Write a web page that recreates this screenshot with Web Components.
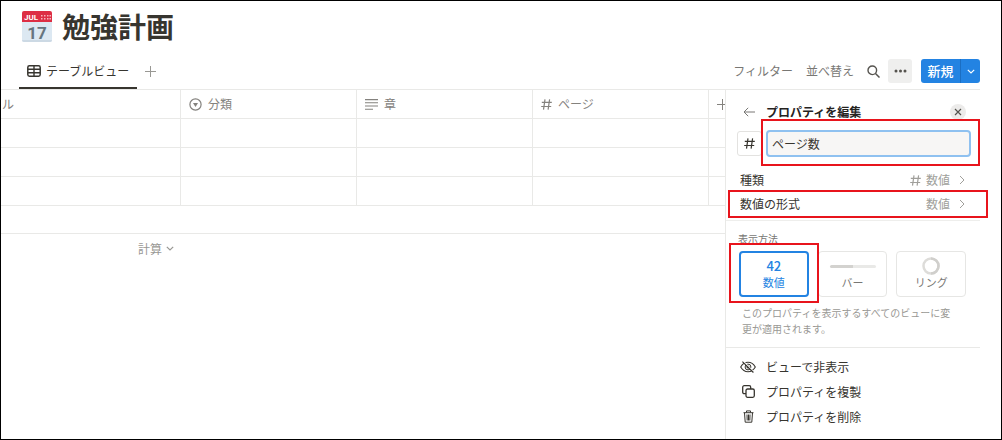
<!DOCTYPE html>
<html lang="ja">
<head>
<meta charset="utf-8">
<title>勉強計画</title>
<style>
html, body { margin: 0; }
body { font-family: "Noto Sans CJK JP", sans-serif; font-size: 12px; line-height: 16px; color: #37352f; background: #fff; }
</style>
</head>
<body>
<study-page></study-page>
<script>
const base = `:host,*{box-sizing:border-box}
button{font:inherit;color:inherit;background:none;border:0;padding:0;margin:0;display:inline-flex;align-items:center;cursor:pointer;white-space:nowrap}
svg{display:block}`;

function define(name, css, html) {
  customElements.define(name, class extends HTMLElement {
    constructor() {
      super();
      this.attachShadow({ mode: 'open' }).innerHTML = `<style>${base}${css}</style>${html}`;
    }
  });
}

const icons = {
  table: [14, 12, '<rect x=".8" y=".8" width="12.4" height="10.4" rx="1.6" stroke-width="1.5"/><path d="M1 4.3h12M1 7.7h12M7 1v10" stroke-width="1.4"/>'],
  plus: [11, 11, '<path d="M5.5 0v11M0 5.5h11"/>'],
  search: [13, 13, '<circle cx="5.3" cy="5.3" r="4.3" stroke-width="1.4"/><path d="M8.5 8.5l4 4" stroke-width="1.5"/>'],
  dots: [13, 4, '<g fill="currentColor" stroke="none"><circle cx="2" cy="2" r="1.5"/><circle cx="6.5" cy="2" r="1.5"/><circle cx="11" cy="2" r="1.5"/></g>'],
  down: [8, 5, '<path d="M.8.8L4 4 7.2.8" stroke-width="1.2"/>'],
  right: [6, 10, '<path d="M1 1l4 4-4 4"/>'],
  back: [12, 10, '<path d="M12 5H1M5.2.8L1 5l4.2 4.2"/>'],
  close: [8, 8, '<path d="M1 1l6 6M7 1L1 7" stroke-width="1.2"/>'],
  select: [13, 13, '<circle cx="6.5" cy="6.5" r="5.6" stroke-width="1.2"/><path d="M4 5h5L6.5 9z" fill="currentColor" stroke="none"/>'],
  lines: [13, 11, '<path d="M0 .6h13M0 3.8h13M0 7h13M0 10.2h8" stroke-width="1.1"/>'],
  hash: [11, 11, '<path d="M4 .3L2.500 10.700M8.600.3L7.100 10.700M.8 3.300h10M.2 7.500h10" stroke-width="1.200"/>'],
  hide: [16, 12, '<path d="M.7 6C2.300 3.200 4.900 1.300 8 1.300S13.700 3.200 15.300 6C13.700 8.800 11.100 10.700 8 10.700S2.300 8.800.7 6z" stroke-width="1.100"/><circle cx="8" cy="6" r="2.900"/><circle cx="8" cy="6" r="1.100" fill="currentColor"/><path d="M3.600.5l10 10.500" stroke="#fff" stroke-width="1.200"/><path d="M2.400.7l11 10.800" stroke-width="1.100"/>'],
  copy: [13, 13, '<rect x=".7" y=".7" width="8" height="8" rx="1.500" stroke-width="1.300"/><rect x="4" y="4" width="8.300" height="8.300" rx="1.500" stroke-width="1.300" fill="#fff"/>'],
  trash: [11, 13, '<path d="M.5 2.700h10M3.500 2.500V.9h4v1.600M1.500 2.900l.7 9.300h6.600l.7-9.300M4 4.500l.2 6M5.500 4.500v6M7 4.500l-.2 6"/>']
};

customElements.define('ui-icon', class extends HTMLElement {
  constructor() {
    super();
    const [w, h, body] = icons[this.getAttribute('name')];
    this.attachShadow({ mode: 'open' }).innerHTML =
      `<style>:host{display:inline-flex;flex:none}svg{display:block}</style>
       <svg width="${w}" height="${h}" viewBox="0 0 ${w} ${h}" fill="none" stroke="currentColor" aria-hidden="true">${body}</svg>`;
  }
});

/* Red annotation frame laid over its positioned parent. */
define('red-mark', `:host{position:absolute;border:2px solid #e8141c;pointer-events:none;z-index:2}`, '');

define('page-title', `
:host{display:flex;align-items:center;gap:9px;height:52px;padding-left:20px}
h1{margin:0;padding-bottom:2px;font-size:28px;line-height:40px;font-weight:700;white-space:nowrap}
svg{flex:none}`, `
<svg width="32" height="32" viewBox="0 0 32 32" role="img" aria-label="カレンダー">
  <path d="M1 10h30v19a2 2 0 0 1-2 2H3a2 2 0 0 1-2-2z" fill="#dce8f2"/>
  <path d="M1 29h30a2 2 0 0 1-2 2H3a2 2 0 0 1-2-2z" fill="#ccd9e4"/>
  <path d="M3 0h26a2 2 0 0 1 2 2v9H1V2a2 2 0 0 1 2-2z" fill="#dd2e44"/>
  <g fill="#f7b5be"><path d="M20 4h1.500v1.500H20zM23 4h1.500v1.500H23zM26 4h1.500v1.500H26zM28.500 4H30v1.500h-1.500zM20 7h1.500v1.500H20zM23 7h1.500v1.500H23zM26 7h1.500v1.500H26zM28.500 7H30v1.500h-1.500z"/></g>
  <text x="3" y="9" font-family="Roboto, sans-serif" font-size="8" font-weight="700" fill="#fff">JUL</text>
  <text x="16" y="28" text-anchor="middle" font-family="Roboto, sans-serif" font-size="17" font-weight="700" fill="#66757f">17</text>
</svg>
<h1><slot></slot></h1>`);

define('view-toolbar', `
:host{display:flex;align-items:stretch;justify-content:space-between;height:37px;border-bottom:1px solid #e9e9e7}
.tabs,.tools{display:flex;align-items:center}
.tabs{padding-left:18px;gap:8px;color:#999894}
.tab{align-self:stretch;gap:5px;padding:2px 8px 0;border-bottom:2px solid #37352f;color:#37352f}
.tools{color:#787774;gap:13px}
.text{color:#787774}
.more{width:24px;height:24px;justify-content:center;background:#efefee;border-radius:3px;color:#55534e}
.search{color:#55534e}
.pair{display:flex;gap:8px;align-items:center}
.new{display:flex;height:24px;background:#2383e2;border-radius:3px;color:#fff;font-size:13px;font-weight:500;margin-left:-4px}
.new button:first-child{padding:0 6px;width:39px;justify-content:center}
.new button:last-child{width:20px;justify-content:center;border-left:1px solid #1b6ec2}`, `
<div class="tabs"><button class="tab"><ui-icon name="table"></ui-icon>テーブルビュー</button>
<button aria-label="ビューを追加"><ui-icon name="plus"></ui-icon></button></div>
<div class="tools"><button class="text">フィルター</button><button class="text">並べ替え</button>
<div class="pair"><button class="search" aria-label="検索"><ui-icon name="search"></ui-icon></button>
<button class="more" aria-label="その他"><ui-icon name="dots"></ui-icon></button></div>
<div class="new"><button>新規</button><button aria-label="新規メニュー"><ui-icon name="down"></ui-icon></button></div></div>`);

define('plan-table', `
:host{display:block;flex:1;min-width:0;overflow:hidden;color:#84827e}
table{border-collapse:separate;border-spacing:0;table-layout:fixed;width:100%}
col.first{width:180px}col.mid{width:176px}
th,td{height:29px;padding:0 8px;border-bottom:1px solid #e9e9e7;border-right:1px solid #e9e9e7;font-weight:400;text-align:left;white-space:nowrap;overflow:hidden}
th:first-child{padding-left:1px}
th:last-child{padding-left:8px;padding-right:0}
th:last-child,td:last-child,.add td,tfoot td{border-right:0}
th div{display:flex;align-items:center;gap:6px}
.add td{height:28px}
tfoot td{border-bottom:0;text-align:right;padding:0 7px;color:#999894}
tfoot button{gap:4px}`, `
<table><colgroup><col class="first"><col class="mid"><col class="mid"><col class="mid"><col></colgroup>
<thead><tr><th scope="col">ル</th>
<th scope="col"><div><ui-icon name="select"></ui-icon>分類</div></th>
<th scope="col"><div><ui-icon name="lines"></ui-icon>章</div></th>
<th scope="col"><div><ui-icon name="hash"></ui-icon>ページ</div></th>
<th><div><button aria-label="列を追加"><ui-icon name="plus"></ui-icon></button></div></th></tr></thead>
<tbody><tr><td></td><td></td><td></td><td></td><td></td></tr>
<tr><td></td><td></td><td></td><td></td><td></td></tr>
<tr><td></td><td></td><td></td><td></td><td></td></tr>
<tr class="add"><td colspan="5"></td></tr></tbody>
<tfoot><tr><td><button>計算<ui-icon name="down"></ui-icon></button></td><td colspan="4"></td></tr></tfoot></table>`);

define('setting-row', `
:host{display:block;position:relative}
button{width:100%;height:24px;justify-content:space-between;padding:0 15px 0 14px}
.value{display:flex;align-items:center;gap:5px;color:#a09f9b}
.value ui-icon:last-child{margin-left:4px}`, `
<button><slot></slot><span class="value"><slot name="value"></slot><ui-icon name="right"></ui-icon></span></button><slot name="mark"></slot>`);

define('display-card', `
:host{display:block;position:relative;flex:1}
button{width:100%;height:46px;flex-direction:column;justify-content:center;border:1px solid #e6e6e4;border-radius:4px;font-size:11px;color:#787774}
.art{display:flex;align-items:center;justify-content:center;height:16px}
:host([selected]) button{border:2px solid #2383e2;color:#2383e2}`, `
<button><span class="art"><slot name="art"></slot></span><slot></slot></button><slot name="mark"></slot>`);

define('menu-action', `
:host{display:block}
button{width:100%;height:25px;padding-left:14px}
span{display:flex;justify-content:center;width:16px;margin-right:10px}`, `
<button><span><slot name="icon"></slot></span><slot></slot></button>`);

define('property-panel', `
:host{display:block;flex:none;width:255px;border-left:1px solid #e9e9e7;padding-top:8px}
header{display:flex;align-items:center;height:28px;padding:0 14px 0 17px;gap:11px;color:#787774}
h2{margin:0;flex:1;font-size:12px;line-height:16px;font-weight:700;color:#25231f}
.close{width:16px;height:16px;border-radius:8px;background:#ecebea;justify-content:center;color:#55534e}
.name{position:relative;display:flex;align-items:center;gap:4px;padding:4px 9px 11px 11px}
.type{width:25px;height:25px;flex:none;justify-content:center;border:1px solid #e3e2e0;border-radius:3px}
input{flex:1;min-width:0;height:27px;font:inherit;color:inherit;background:#f7f6f5;border:2px solid #8fc1f0;border-radius:4px;outline:0;padding:0 4px}
.display{border-top:1px solid #eeeeec;margin-top:4px;padding:10px 14px 10px 13px;color:#787774}
h3{margin:0 0 4px -1px;font-size:10px;line-height:16px;font-weight:400}
.cards{display:flex;gap:9px}
p{margin:8px 0 0;padding:0 0 0 3px;width:216px;font-size:10px;line-height:16px;color:#999894}
.actions{border-top:1px solid #e9e9e7;padding:6px 0}
b{font-size:13px;font-weight:500}
.bar{width:46px;height:3px;border-radius:2px;background:linear-gradient(90deg,#d3d2cf 50%,#e9e9e7 50%)}
.m1{top:-7px;right:0;bottom:2px;left:35px}
.m2{top:-2px;right:-8px;bottom:-2px;left:2px}
.m3{top:-8px;right:-10px;bottom:-6px;left:-10px}`, `
<header><button aria-label="戻る"><ui-icon name="back"></ui-icon></button><h2>プロパティを編集</h2>
<button class="close" aria-label="閉じる"><ui-icon name="close"></ui-icon></button></header>
<div class="name"><button class="type" aria-label="アイコン"><ui-icon name="hash"></ui-icon></button>
<input type="text" aria-label="プロパティ名" value="ページ数"><red-mark class="m1"></red-mark></div>
<setting-row>種類<ui-icon slot="value" name="hash"></ui-icon><span slot="value">数値</span></setting-row>
<setting-row>数値の形式<span slot="value">数値</span><red-mark slot="mark" class="m2"></red-mark></setting-row>
<section class="display"><h3>表示方法</h3>
<div class="cards">
<display-card selected><b slot="art">42</b>数値<red-mark slot="mark" class="m3"></red-mark></display-card>
<display-card><div slot="art" class="bar"></div>バー</display-card>
<display-card><svg slot="art" width="18" height="18" viewBox="0 0 18 18" fill="none" stroke-width="2.500"><circle cx="9" cy="9" r="7.500" stroke="#dddcd9"/><path d="M9 1.500a7.500 7.500 0 0 1 0 15" stroke="#d0cfcc"/></svg>リング</display-card>
</div>
<p>このプロパティを表示するすべてのビューに変更が適用されます。</p></section>
<div class="actions">
<menu-action><ui-icon slot="icon" name="hide"></ui-icon>ビューで非表示</menu-action>
<menu-action><ui-icon slot="icon" name="copy"></ui-icon>プロパティを複製</menu-action>
<menu-action><ui-icon slot="icon" name="trash"></ui-icon>プロパティを削除</menu-action></div>`);

define('study-page', `
:host{display:flex;flex-direction:column;min-height:100vh;border:1px solid #000;padding-right:21px;overflow:hidden}
main{display:flex;flex:1}`, `
<page-title>勉強計画</page-title>
<view-toolbar></view-toolbar>
<main><plan-table></plan-table><property-panel></property-panel></main>`);
</script>
</body>
</html>
